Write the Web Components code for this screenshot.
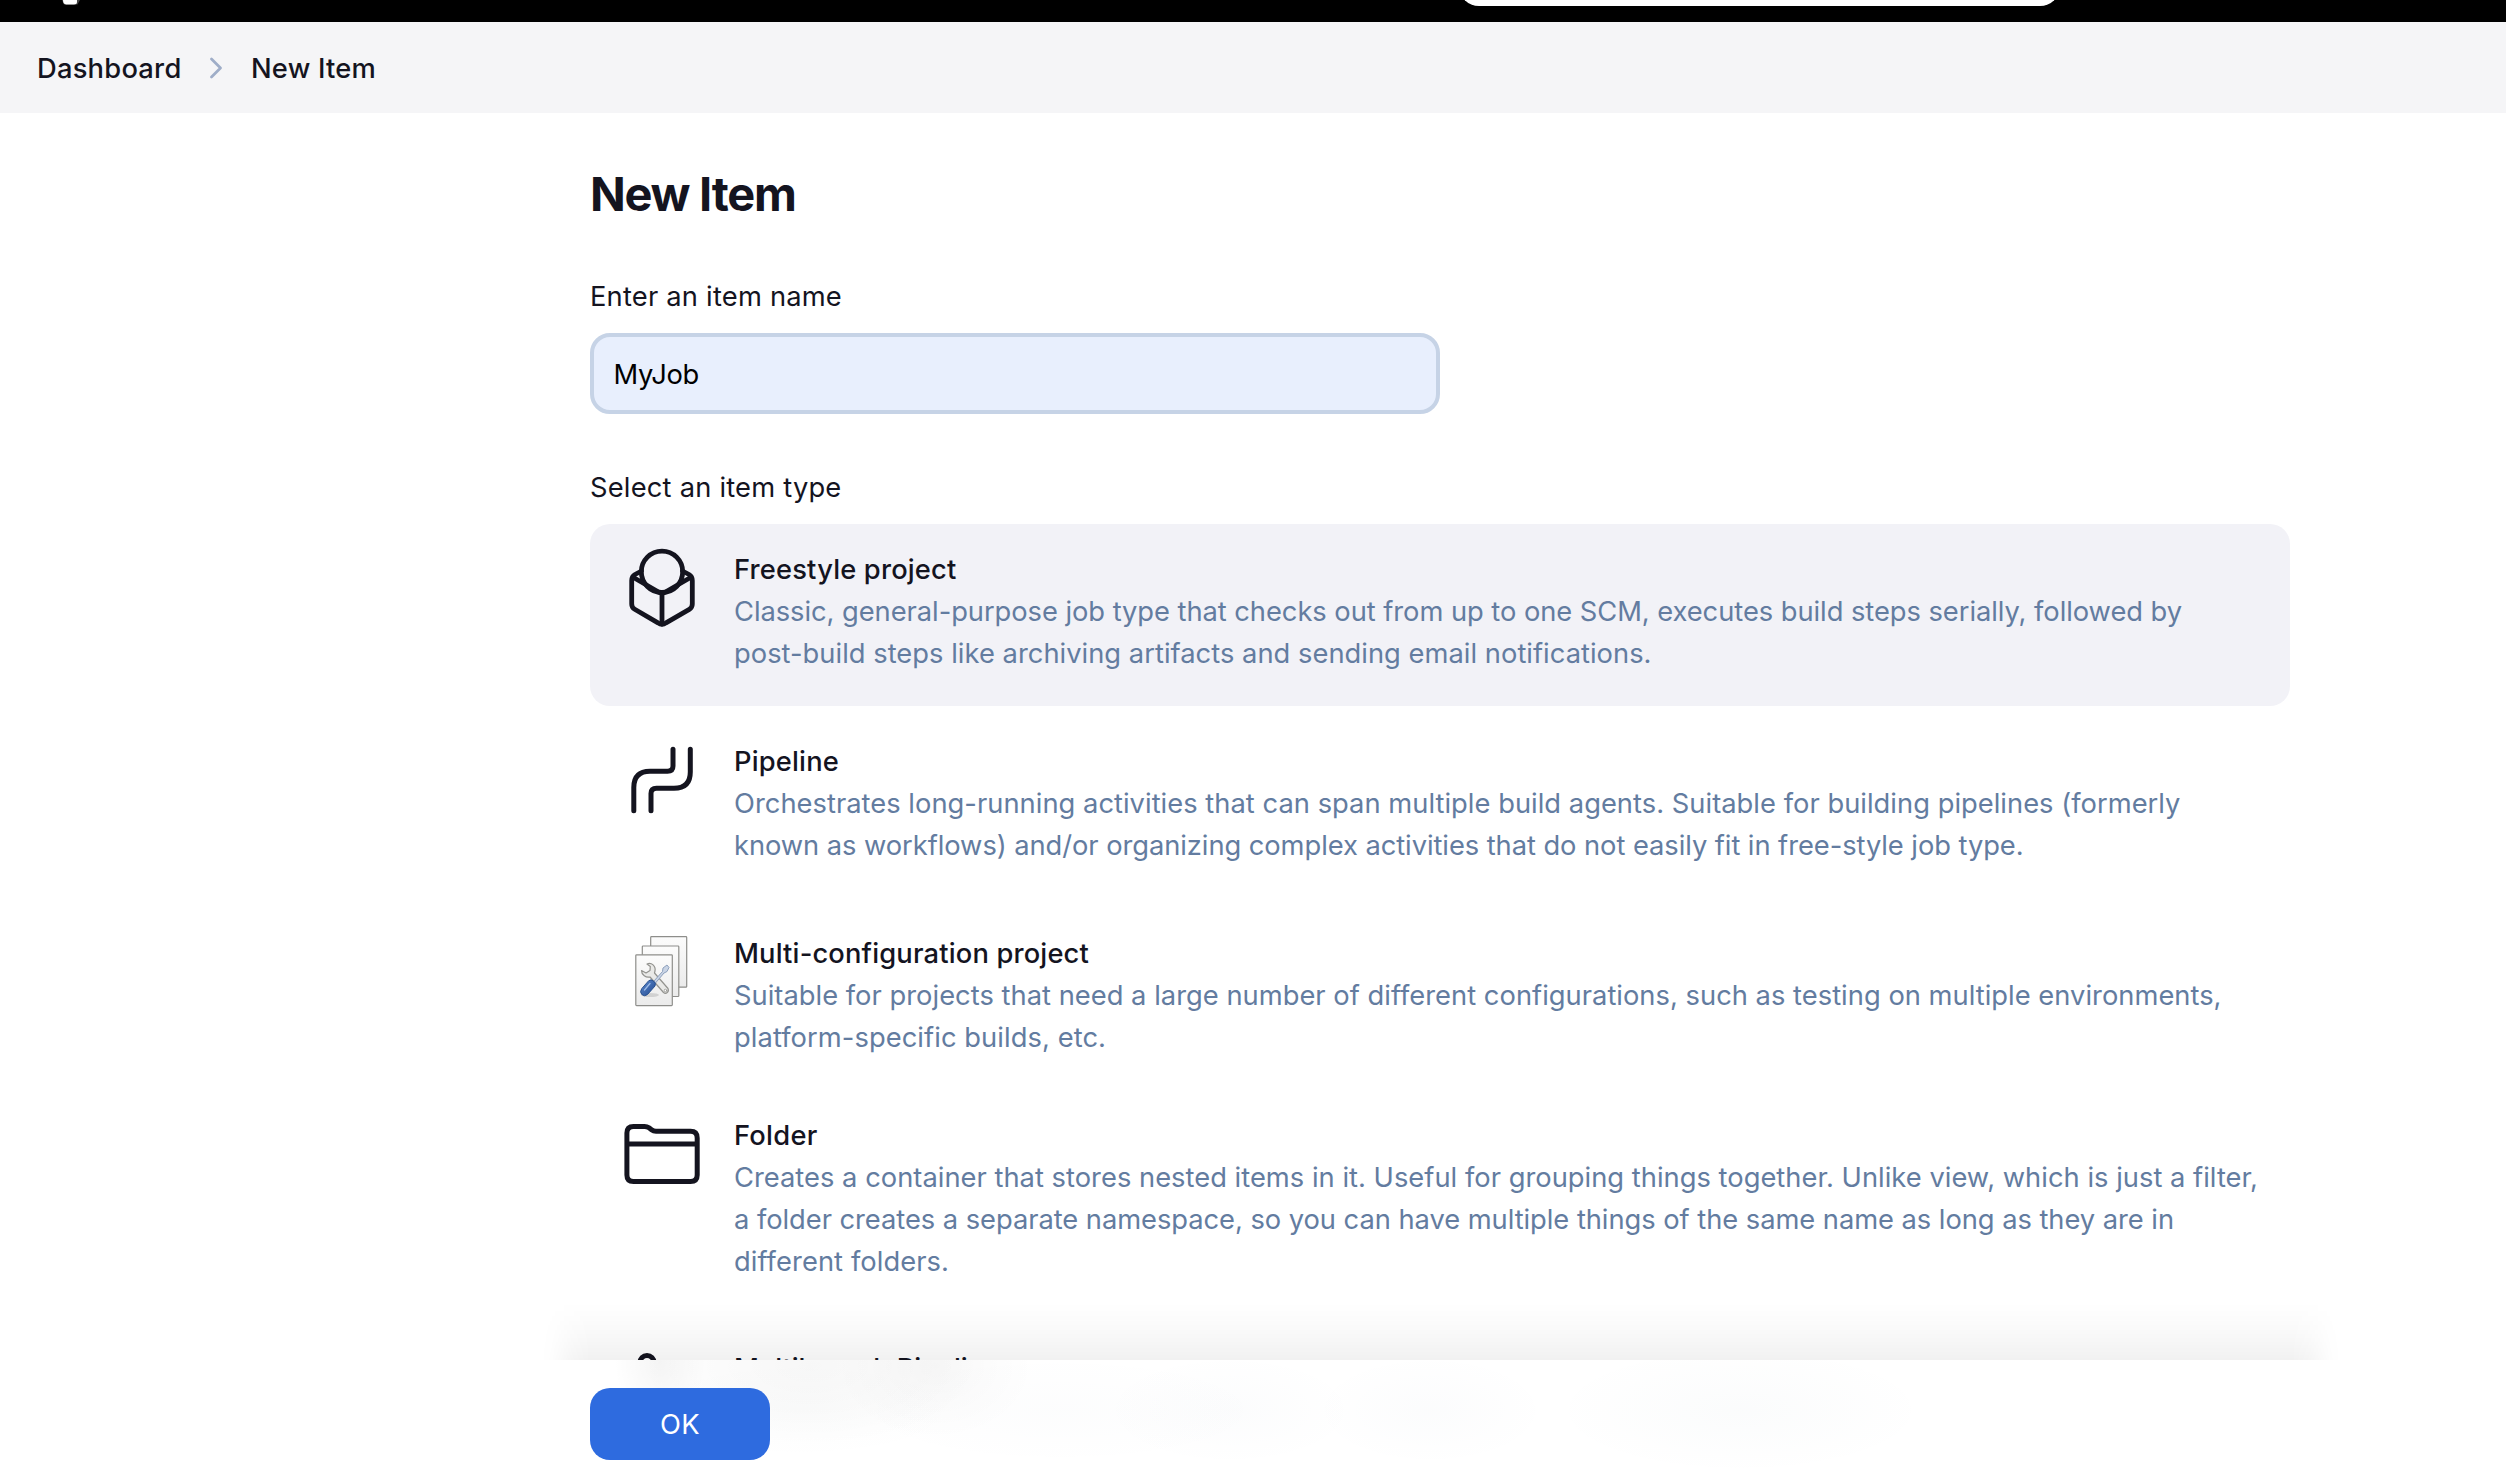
<!DOCTYPE html>
<html lang="en">
<head>
<meta charset="utf-8">
<title>New Item</title>
<style>
  html, body { margin: 0; height: 100%; overflow: hidden; background: #fff; }
  body { font-family: Inter, "Liberation Sans", sans-serif; font-size: 27.3px; font-weight: 420; color: #14141f; }
</style>
</head>
<body>
<new-item-page></new-item-page>

<script>
const define = (name, html, after) => {
  const tpl = document.createElement('template');
  tpl.innerHTML = html;
  customElements.define(name, class extends HTMLElement {
    connectedCallback() {
      if (this.shadowRoot) return;
      this.attachShadow({ mode: 'open' }).append(tpl.content.cloneNode(true));
      if (after) after(this, this.shadowRoot);
    }
  });
};

/* One line of text, tracked so that its advance equals the "w" attribute. */
define('fit-line', `
  <style>:host{display:block;white-space:nowrap} span{display:inline-block}</style>
  <span><slot></slot></span>`, (el, root) => {
  const span = root.querySelector('span');
  const n = el.textContent.length;
  const diff = parseFloat(el.getAttribute('w')) - span.getBoundingClientRect().width;
  span.style.letterSpacing = (diff / n).toFixed(4) + 'px';
});

define('top-bar', `
  <style>
    :host{display:flex;flex:none;justify-content:space-between;align-items:flex-start;height:22px;background:#000;overflow:hidden;box-sizing:border-box;padding:0 446px 0 62px}
    .search{width:601px;height:46px;margin-top:-40px;border-radius:20px;background:#fff}
  </style>
  <svg width="24" height="8" viewBox="0 0 24 8"><path d="M0 0H18L15.500 4.500H2Z" fill="#444"/><path d="M1 0H15V2Q15 4.500 12 4.500H4Q1 4 1 0Z" fill="#fff"/></svg>
  <div class="search"></div>`);

define('bread-crumbs', `
  <style>
    :host{display:flex;flex:none;align-items:center;height:91px;box-sizing:border-box;background:#f5f5f7;padding:1px 0 0 37px;font-weight:500}
    svg{margin:0 27.500px 0 28px}
  </style>
  <fit-line w="144.500">Dashboard</fit-line>
  <svg width="14" height="22" viewBox="0 0 14 22"><path d="M1.500 2L10.500 11L1.500 20" fill="none" stroke="#9fadc8" stroke-width="2.700" stroke-linecap="round" stroke-linejoin="round"/></svg>
  <fit-line w="125">New Item</fit-line>`);

define('text-field', `
  <style>
    :host{display:flex;flex:none;align-items:center;box-sizing:border-box;width:850px;height:81px;border:4px solid #c6d3e6;border-radius:20px;background:#e8effd;color:#000;padding:1px 0 0 19.500px}
  </style>
  <slot></slot>`);

define('item-option', `
  <style>
    :host{display:flex;flex:none;box-sizing:border-box;border-radius:20px;height:var(--h,182px)}
    :host([selected]){background:#f2f2f7}
    .icon{width:144px;flex:none}
    .body{padding-top:24.500px;line-height:42px}
    .title{font-weight:500}
    .desc{color:#637ca0}
    ::slotted(svg){display:block;fill:none;stroke:#14141f;stroke-width:5;stroke-linecap:round;stroke-linejoin:round}
  </style>
  <div class="icon"><slot name="icon"></slot></div>
  <div class="body"><div class="title"><slot name="title"></slot></div><div class="desc"><slot></slot></div></div>`);

define('bottom-bar', `
  <style>
    :host{display:block;position:fixed;left:0;right:0;bottom:0}
    .shade{height:58px;margin:0 165px 0 541px;background:linear-gradient(#0000 0,rgba(0,0,0,.008) 20%,rgba(0,0,0,.028) 60%,rgba(0,0,0,.055) 100%);
      -webkit-mask-image:linear-gradient(90deg,#0000 0,#0002 10px,#000b 32px,#000 50px,#000 calc(100% - 50px),#000b calc(100% - 32px),#0002 calc(100% - 10px),#0000 100%)}
    .bar{height:120px;box-sizing:border-box;padding:28px 0 0 590px;background:
      radial-gradient(46px 62px at 660px 2px,rgba(0,0,0,.04),rgba(0,0,0,.018) 50%,#0000),
      radial-gradient(100px 74px at 935px 6px,rgba(0,0,0,.03),rgba(0,0,0,.012) 55%,#0000),
      radial-gradient(170px 80px at 810px 6px,rgba(0,0,0,.03),rgba(0,0,0,.015) 55%,#0000),
      radial-gradient(170px 50px at 800px 50px,rgba(40,80,80,.012),#0000),
      radial-gradient(130px 56px at 1230px 50px,rgba(40,70,120,.014),#0000),
      radial-gradient(120px 56px at 1430px 50px,rgba(40,70,120,.014),#0000),
      radial-gradient(190px 64px at 1740px 50px,rgba(40,90,110,.018),#0000),
      radial-gradient(220px 56px at 1060px 50px,rgba(40,70,120,.012),#0000),
      #fff}
    .ok{display:flex;align-items:center;justify-content:center;width:180px;height:72px;border-radius:20px;background:#2e6bdf;color:#fff}
  </style>
  <div class="shade"></div>
  <div class="bar"><div class="ok"><fit-line w="40">OK</fit-line></div></div>`);

define('new-item-page', `
  <style>
    :host{display:flex;flex-direction:column;height:1480px;overflow:hidden}
    main{display:flex;flex:none;flex-direction:column;width:1700px;padding:60px 0 0 590px}
    h1{margin:0;font-size:47px;line-height:42px;font-weight:670}
    .label{line-height:42px}
    .name{margin-top:61px}
    text-field{margin-top:15px}
    .type{margin-top:53px;margin-bottom:15px}
    .list{display:flex;flex-direction:column;gap:10px}
    .last{margin-top:1px}
  </style>
  <top-bar></top-bar>
  <bread-crumbs></bread-crumbs>
  <main>
    <h1><fit-line w="205.500">New Item</fit-line></h1>
    <div class="label name"><fit-line w="252">Enter an item name</fit-line></div>
    <text-field><fit-line w="85.500">MyJob</fit-line></text-field>
    <div class="label type"><fit-line w="251.500">Select an item type</fit-line></div>
    <div class="list">
      <item-option selected>
        <svg slot="icon" width="144" height="120" viewBox="0 0 144 120"><g stroke-width="4.800">
          <circle cx="72" cy="47.800" r="20.700"/>
          <path d="M51.500 47L45 50.500Q41.700 52.500 41.700 56.500V80Q41.700 83.500 44.700 85.300L68 98.800Q72 101.800 76 98.800L99.300 85.300Q102.300 83.500 102.300 80V56.500Q102.300 52.500 99 50.500L92.500 47"/>
          <path d="M43.500 53.500L72 70L100.500 53.500M72 70V100"/></g></svg>
        <fit-line slot="title" w="222.500">Freestyle project</fit-line>
        <fit-line w="1448">Classic, general-purpose job type that checks out from up to one SCM, executes build steps serially, followed by</fit-line>
        <fit-line w="917.500">post-build steps like archiving artifacts and sending email notifications.</fit-line>
      </item-option>
      <item-option>
        <svg slot="icon" width="144" height="120" viewBox="0 0 144 120">
          <path d="M43.800 94.800V71.500Q43.800 55.300 60 55.300H77.500Q83 55.300 83 50V33.300"/>
          <path d="M61 94.800V77.500Q61 72.300 66.500 72.300H84Q100.300 72.300 100.300 56V33.300"/></svg>
        <fit-line slot="title" w="105">Pipeline</fit-line>
        <fit-line w="1446.500">Orchestrates long-running activities that can span multiple build agents. Suitable for building pipelines (formerly</fit-line>
        <fit-line w="1289.500">known as workflows) and/or organizing complex activities that do not easily fit in free-style job type.</fit-line>
      </item-option>
      <item-option style="--h:172px">
        <svg slot="icon" width="144" height="120" viewBox="0 0 144 120">
          <defs>
            <linearGradient id="pg" x1="0" y1="0" x2="0" y2="1"><stop offset="0" stop-color="#fcfcfc"/><stop offset="1" stop-color="#ebebeb"/></linearGradient>
            <linearGradient id="hd" x1="0" y1="0" x2="1" y2="1"><stop offset="0" stop-color="#5b8bcf"/><stop offset="1" stop-color="#24498f"/></linearGradient>
          </defs>
          <g fill="url(#pg)" stroke="#8e8e8b" stroke-width="1.200">
            <rect x="60.700" y="28.700" width="36" height="50.500" rx=".8"/>
            <rect x="52.300" y="38" width="36.500" height="50.500" rx=".8"/>
            <rect x="45.800" y="46.800" width="36.500" height="50.800" rx=".8"/>
          </g>
          <ellipse cx="60" cy="87" rx="9" ry="2" fill="#000" fill-opacity=".12" stroke="none"/>
          <path d="M57 56C61.500 54 66 58 65 63L64.500 65L78 80.500C79.500 84 76 86.500 73.500 84.500L60 69C56 70 51.500 67 51.500 62.500L56 65L60 62.500L60.300 58.500Z" fill="#e9e9e7" stroke="#93938f" stroke-width="1.200"/>
          <circle cx="75.500" cy="82.500" r="1.300" fill="#fff" stroke="#93938f" stroke-width=".8"/>
          <path d="M64 73L72.500 63.500L73 60L77 57L79 59.500L77 63.500L74 65L65.500 75Z" fill="#c9d4e5" stroke="#8da0bd" stroke-width="1"/>
          <path d="M59 72.500Q61 71 63.500 73Q66.500 75 65 78L57.500 86.500Q54.500 89 51.800 86.500Q49.500 84 51.500 81Z" fill="url(#hd)" stroke="#28508f" stroke-width="1"/>
          <path d="M54.500 82L60 75.500" stroke="#9dbbe8" stroke-width="1.300"/>
        </svg>
        <fit-line slot="title" w="355">Multi-configuration project</fit-line>
        <fit-line w="1487.500">Suitable for projects that need a large number of different configurations, such as testing on multiple environments,</fit-line>
        <fit-line w="372">platform-specific builds, etc.</fit-line>
      </item-option>
      <item-option style="--h:222px">
        <svg slot="icon" width="144" height="120" viewBox="0 0 144 120">
          <path d="M36.900 43Q36.900 36.400 43.500 36.400H54.500Q57 36.400 59 37.800L61.500 39.700Q63.500 41.300 66 41.300H100.500Q107.200 41.300 107.200 48V85Q107.200 91.500 100.500 91.500H43.500Q36.900 91.500 36.900 85ZM37 54H107"/></svg>
        <fit-line slot="title" w="83.500">Folder</fit-line>
        <fit-line w="1524">Creates a container that stores nested items in it. Useful for grouping things together. Unlike view, which is just a filter,</fit-line>
        <fit-line w="1440">a folder creates a separate namespace, so you can have multiple things of the same name as long as they are in</fit-line>
        <fit-line w="215">different folders.</fit-line>
      </item-option>
      <item-option class="last">
        <svg slot="icon" width="144" height="120" viewBox="0 0 144 120">
          <circle cx="57" cy="39.500" r="7"/><circle cx="57" cy="88" r="7"/><circle cx="88" cy="52" r="7"/>
          <path d="M57 47V81M88 59Q88 70 57 76"/></svg>
        <fit-line slot="title" w="266">Multibranch Pipeline</fit-line>
      </item-option>
    </div>
  </main>
  <bottom-bar></bottom-bar>`);
</script>
</body>
</html>
